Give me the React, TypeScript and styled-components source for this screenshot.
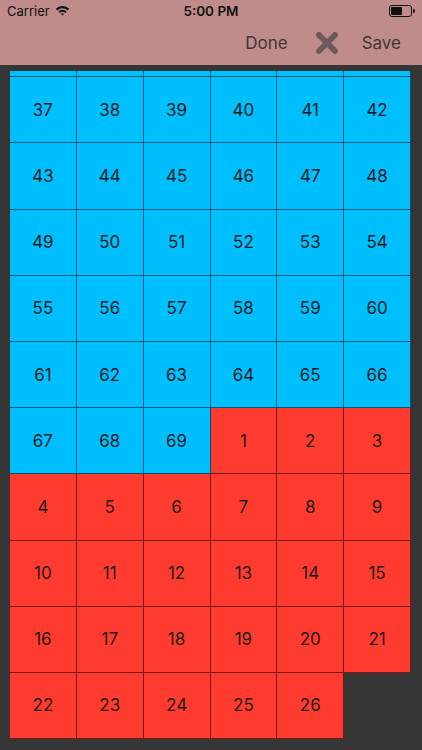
import React, { useLayoutEffect, useRef } from 'react'
import styled, { createGlobalStyle } from 'styled-components'

const ROW_H = 66.2

const GlobalStyle = createGlobalStyle`
    html, body {
        margin: 0;
        padding: 0;
        background: #363636;
        font-family: Inter, "Liberation Sans", sans-serif;
    }
    * { box-sizing: border-box; }
`

const Page = styled.div`
    width: 422px;
    height: 750px;
    display: flex;
    flex-direction: column;
    background: #363636;
    overflow: hidden;
`

const Header = styled.header`
    background: #bf8c8b;
    display: flex;
    flex-direction: column;
    flex-shrink: 0;
`

const StatusBar = styled.div`
    height: 21px;
    display: flex;
    align-items: center;
    justify-content: space-between;
    padding: 0 7px;
    font-size: 13px;
    color: #111;
    position: relative;
`

const Carrier = styled.div`
    display: flex;
    align-items: center;
    gap: 5px;
`

const Clock = styled.div`
    position: absolute;
    left: 0;
    right: 0;
    text-align: center;
    font-weight: 600;
    font-size: 13.5px;
`

const NavBar = styled.div`
    height: 44px;
    display: flex;
    align-items: center;
    justify-content: flex-end;
    padding-right: 21px;
`

const NavButton = styled.span`
    font-size: 17px;
    color: #3f3536;
`

const CloseIcon = styled.svg`
    margin-left: 27px;
    margin-right: 23px;
`

const Body = styled.div`
    flex: 1;
    padding: 6px 11px 0 10px;
    display: flex;
    flex-direction: column;
    min-height: 0;
`

const Scroller = styled.div`
    flex: 1;
    overflow: hidden;
`

const Grid = styled.div`
    display: grid;
    grid-template-columns: repeat(6, 1fr);
    grid-auto-rows: ${ROW_H}px;
    padding-bottom: 40px;
`

const Cell = styled.div<{ $color: 'blue' | 'red' }>`
    background: ${p => (p.$color === 'blue' ? '#00bfff' : '#ff3b30')};
    border-right: 1px solid rgba(0, 0, 0, 0.55);
    border-bottom: 1px solid rgba(0, 0, 0, 0.55);
    display: flex;
    align-items: center;
    justify-content: center;
    font-size: 17px;
    color: #1c1c1c;
`

const Wifi = () => (
    <svg width="15" height="11" viewBox="0 0 15 11">
        <path d="M0.8 3.8 A9.5 9.5 0 0 1 14.2 3.8 L12.6 5.4 A7.2 7.2 0 0 0 2.4 5.4 Z" fill="#111" />
        <path d="M3.4 6.4 A5.8 5.8 0 0 1 11.6 6.4 L10 8 A3.5 3.5 0 0 0 5 8 Z" fill="#111" />
        <path d="M6 9 A2.1 2.1 0 0 1 9 9 L7.5 10.6 Z" fill="#111" />
    </svg>
)

const Battery = () => (
    <svg width="26" height="12" viewBox="0 0 26 12">
        <rect x="0.5" y="0.5" width="22" height="11" rx="2.5" fill="none" stroke="#111" strokeWidth="1" />
        <rect x="2" y="2" width="11" height="8" rx="1" fill="#111" />
        <path d="M24 4 a1.5 1.5 0 0 1 0 4 Z" fill="#111" />
    </svg>
)

// list is scrolled so only the bottom sliver of the row above 37 shows
const blue = Array.from({ length: 39 }, (_, i) => i + 31)
const red = Array.from({ length: 26 }, (_, i) => i + 1)

const App: React.FC = () => {
    const scrollRef = useRef<HTMLDivElement>(null)

    useLayoutEffect(() => {
        if (scrollRef.current) scrollRef.current.scrollTop = ROW_H - 6
    }, [])

    return (
        <Page>
            <GlobalStyle />
            <Header>
                <StatusBar>
                    <Carrier>
                        Carrier <Wifi />
                    </Carrier>
                    <Clock>5:00 PM</Clock>
                    <Battery />
                </StatusBar>
                <NavBar>
                    <NavButton>Done</NavButton>
                    <CloseIcon width="24" height="24" viewBox="0 0 24 24">
                        <path d="M4 4 L20 20 M20 4 L4 20" stroke="#6d5b5c" strokeWidth="6" strokeLinecap="round" />
                    </CloseIcon>
                    <NavButton>Save</NavButton>
                </NavBar>
            </Header>
            <Body>
                <Scroller ref={scrollRef}>
                    <Grid>
                        {blue.map(n => (
                            <Cell key={'b' + n} $color="blue">{n > 36 ? n : null}</Cell>
                        ))}
                        {red.map(n => (
                            <Cell key={'r' + n} $color="red">{n}</Cell>
                        ))}
                    </Grid>
                </Scroller>
            </Body>
        </Page>
    )
}

export default App
